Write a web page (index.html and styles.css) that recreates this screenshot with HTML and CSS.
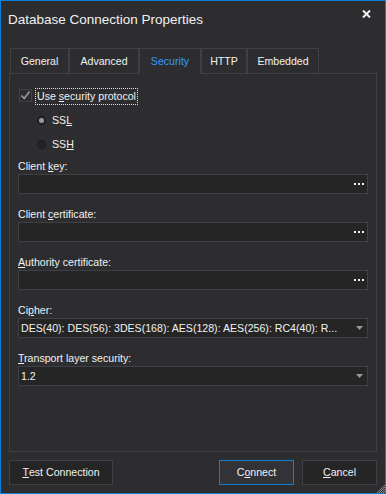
FILE: index.html
```html
<!DOCTYPE html>
<html>
<head>
<meta charset="utf-8">
<link rel="stylesheet" href="styles.css">
</head>
<body>
<div class="window">
  <div class="titlebar">
    <div class="title">Database Connection Properties</div>
    <svg class="close" width="9" height="8" viewBox="0 0 9 8"><path d="M1 0.5 L8 7.5 M8 0.5 L1 7.5" stroke="#f1f1f1" stroke-width="2" fill="none"/></svg>
  </div>
  <div class="tabs">
    <div class="tab t-general">General</div>
    <div class="tab t-advanced">Advanced</div>
    <div class="tab t-security active">Security</div>
    <div class="tab t-http">HTTP</div>
    <div class="tab t-embedded">Embedded</div>
  </div>
  <div class="panel">
    <div class="check-row">
      <div class="checkbox"><svg width="11" height="11" viewBox="0 0 11 11"><path d="M1.5 5.5 L4.2 8.5 L9.5 1.5" stroke="#9a9a9a" stroke-width="1.6" fill="none"/></svg></div>
      <div class="check-label">Use <u>s</u>ecurity protocol</div>
    </div>
    <div class="radio-row first">
      <div class="radio checked"><div class="dot"></div></div>
      <div class="radio-label">SS<u>L</u></div>
    </div>
    <div class="radio-row second">
      <div class="radio"></div>
      <div class="radio-label">SS<u>H</u></div>
    </div>
    <div class="field first-field">
      <div class="label">Client <u>k</u>ey:</div>
      <div class="input"><svg width="10" height="2" viewBox="0 0 10 2"><rect x="0" y="0" width="2" height="2" fill="#f1f1f1"/><rect x="4" y="0" width="2" height="2" fill="#f1f1f1"/><rect x="8" y="0" width="2" height="2" fill="#f1f1f1"/></svg></div>
    </div>
    <div class="field">
      <div class="label">Client <u>c</u>ertificate:</div>
      <div class="input"><svg width="10" height="2" viewBox="0 0 10 2"><rect x="0" y="0" width="2" height="2" fill="#f1f1f1"/><rect x="4" y="0" width="2" height="2" fill="#f1f1f1"/><rect x="8" y="0" width="2" height="2" fill="#f1f1f1"/></svg></div>
    </div>
    <div class="field">
      <div class="label"><u>A</u>uthority certificate:</div>
      <div class="input"><svg width="10" height="2" viewBox="0 0 10 2"><rect x="0" y="0" width="2" height="2" fill="#f1f1f1"/><rect x="4" y="0" width="2" height="2" fill="#f1f1f1"/><rect x="8" y="0" width="2" height="2" fill="#f1f1f1"/></svg></div>
    </div>
    <div class="field">
      <div class="label">Ci<u>p</u>her:</div>
      <div class="select"><span class="sel-text">DES(40): DES(56): 3DES(168): AES(128): AES(256): RC4(40): R...</span><svg width="7" height="4" viewBox="0 0 7 4"><path d="M0 0 H7 L3.5 4 Z" fill="#999999"/></svg></div>
    </div>
    <div class="field">
      <div class="label"><u>T</u>ransport layer security:</div>
      <div class="select"><span class="sel-text">1.2</span><svg width="7" height="4" viewBox="0 0 7 4"><path d="M0 0 H7 L3.5 4 Z" fill="#999999"/></svg></div>
    </div>
  </div>
  <div class="buttons">
    <div class="btn btn-test"><u>T</u>est Connection</div>
    <div class="btn btn-connect">C<u>o</u>nnect</div>
    <div class="btn btn-cancel"><u>C</u>ancel</div>
  </div>
  <svg class="grip" width="8" height="8" viewBox="0 0 8 8">
    <rect x="7" y="0" width="1" height="1" fill="#8a8a8a"/>
    <rect x="6" y="1" width="1" height="1" fill="#8a8a8a"/>
    <rect x="5" y="2" width="1" height="1" fill="#8a8a8a"/>
    <rect x="7" y="2" width="1" height="1" fill="#8a8a8a"/>
    <rect x="4" y="3" width="1" height="1" fill="#8a8a8a"/>
    <rect x="6" y="3" width="1" height="1" fill="#8a8a8a"/>
    <rect x="3" y="4" width="1" height="1" fill="#8a8a8a"/>
    <rect x="5" y="4" width="1" height="1" fill="#8a8a8a"/>
    <rect x="7" y="4" width="1" height="1" fill="#8a8a8a"/>
    <rect x="2" y="5" width="1" height="1" fill="#8a8a8a"/>
    <rect x="4" y="5" width="1" height="1" fill="#8a8a8a"/>
    <rect x="6" y="5" width="1" height="1" fill="#8a8a8a"/>
    <rect x="1" y="6" width="1" height="1" fill="#8a8a8a"/>
    <rect x="3" y="6" width="1" height="1" fill="#8a8a8a"/>
    <rect x="5" y="6" width="1" height="1" fill="#8a8a8a"/>
    <rect x="7" y="6" width="1" height="1" fill="#8a8a8a"/>
    <rect x="0" y="7" width="1" height="1" fill="#8a8a8a"/>
    <rect x="2" y="7" width="1" height="1" fill="#8a8a8a"/>
    <rect x="4" y="7" width="1" height="1" fill="#8a8a8a"/>
    <rect x="6" y="7" width="1" height="1" fill="#8a8a8a"/>
  </svg>
</div>
</body>
</html>
```
FILE: styles.css
```css
* { box-sizing: border-box; }
html, body { margin: 0; padding: 0; background: #2d2d30; }
body {
  font-family: "Liberation Sans", Arial, sans-serif;
  font-size: 10.6px;
  color: #f1f1f1;
}
u { text-decoration: underline; text-underline-offset: 1px; }
.window {
  position: relative;
  width: 386px;
  height: 494px;
  border: 1px solid #0e7fd6;
  background: #2d2d30;
  display: flex;
  flex-direction: column;
}
.titlebar {
  height: 47px;
  display: flex;
  justify-content: space-between;
  align-items: flex-start;
  flex: none;
}
.title {
  font-size: 13.5px;
  line-height: 16px;
  padding-top: 11px;
  padding-left: 7px;
}
.close {
  margin-top: 9px;
  margin-right: 14px;
}
.tabs {
  display: flex;
  margin-left: 9px;
  height: 26px;
  position: relative;
  z-index: 1;
  flex: none;
}
.tab {
  height: 26px;
  border: 1px solid #3f3f46;
  display: flex;
  align-items: center;
  justify-content: center;
  line-height: 13px;
  background: #2d2d30;
}
.tab.active { color: #3399ff; border-bottom-color: #2d2d30; }
.t-general { width: 59px; }
.t-advanced { width: 70px; }
.t-security { width: 62px; }
.t-http { width: 46px; }
.t-embedded { width: 72px; }
.panel {
  margin-top: -1px;
  margin-left: 8px;
  width: 368px;
  height: 379px;
  border: 1px solid #3f3f46;
  padding: 0 8px;
  flex: none;
}
.check-row {
  margin-top: 14px;
  height: 17px;
  display: flex;
  align-items: flex-start;
}
.checkbox {
  margin-top: 1px;
  margin-left: 1px;
  width: 13px;
  height: 13px;
  border: 1px solid #434346;
  background: #2d2d30;
  display: flex;
}
.check-label {
  margin-left: 3px;
  height: 17px;
  border: 1px dotted #e0e0e0;
  line-height: 15px;
  padding: 0 1px;
}
.radio-row {
  display: flex;
  align-items: center;
  height: 14px;
  padding-left: 17px;
}
.radio-row.first { margin-top: 8px; }
.radio-row.second { margin-top: 10px; }
.radio {
  width: 13px;
  height: 13px;
  border-radius: 50%;
  background: #232325;
  border: 1px solid #38383d;
  display: flex;
  align-items: center;
  justify-content: center;
}
.radio .dot {
  width: 5px;
  height: 5px;
  border-radius: 50%;
  background: #9a9a9a;
}
.radio-label {
  margin-left: 4px;
  line-height: 14px;
}
.field { margin-top: 14px; }
.field.first-field { margin-top: 9px; }
.label {
  height: 13px;
  line-height: 13px;
  margin-bottom: 1px;
}
.input, .select {
  height: 20px;
  border: 1px solid #3f3f46;
  background: #252526;
  display: flex;
  align-items: center;
}
.input { justify-content: flex-end; padding-right: 3px; }
.select { justify-content: space-between; padding-left: 2px; padding-right: 4px; }
.sel-text { white-space: nowrap; overflow: hidden; line-height: 14px; }
.buttons {
  display: flex;
  margin-top: 8px;
  padding: 0 8px;
  gap: 8px;
}
.btn {
  height: 25px;
  border: 1px solid #3f3f46;
  background: #252526;
  display: flex;
  align-items: center;
  justify-content: center;
  line-height: 13px;
}
.btn-test { width: 104px; }
.btn-connect { width: 75px; margin-left: auto; border-color: #0e7fd6; background: #333337; }
.btn-cancel { width: 75px; }
.grip { position: absolute; right: 0; bottom: 0; }
```
